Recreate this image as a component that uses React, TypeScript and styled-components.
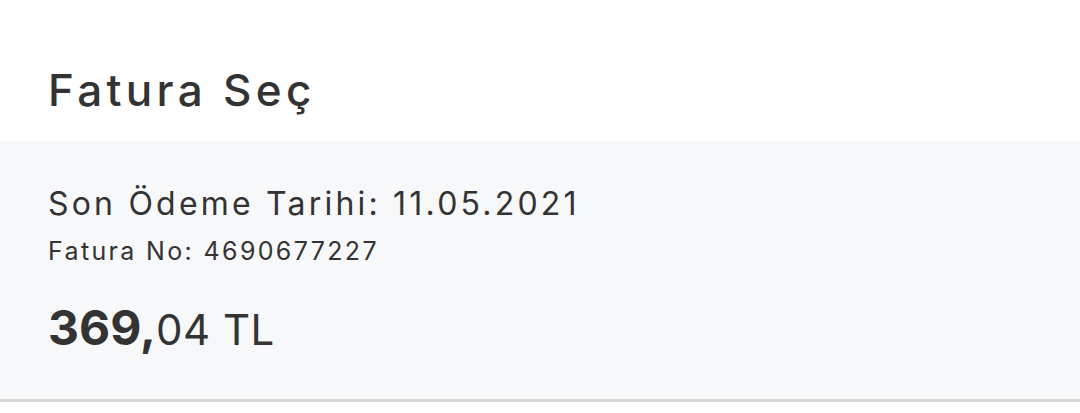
import React from "react";
import styled, { createGlobalStyle } from "styled-components";

const GlobalStyle = createGlobalStyle`
  html, body {
    margin: 0;
    padding: 0;
    background: #fff;
  }
  body {
    font-family: "Inter", "Noto Sans", sans-serif;
    color: #333333;
  }
`;

const Page = styled.div`
  width: 1080px;
  height: 413px;
  background: #fff;
  overflow: hidden;
`;

const Header = styled.div`
  height: 141px;
  box-sizing: border-box;
  padding: 62px 48px 0;
`;

const Title = styled.h1`
  margin: 0;
  font-size: 44px;
  line-height: 56px;
  font-weight: 500;
  letter-spacing: 4.3px;
  color: #333;
`;

const InvoiceCard = styled.div`
  background: #f7f8fa;
  height: 261px;
  box-sizing: border-box;
  padding: 43px 48px 0;
  border-bottom: 3px solid #dadadb;
`;

const DueDate = styled.div`
  font-size: 32px;
  line-height: 40px;
  letter-spacing: 3.2px;
  color: #333;
`;

const InvoiceNo = styled.div`
  margin-top: 11px;
  font-size: 25px;
  line-height: 32px;
  letter-spacing: 2.35px;
  color: #333;
`;

const Amount = styled.div`
  margin-top: 33px;
  line-height: 56px;
  color: #333;
  display: flex;
  align-items: baseline;
`;

const Whole = styled.span`
  font-size: 48px;
  font-weight: 700;
`;

const Fraction = styled.span`
  font-size: 42px;
  font-weight: 400;
  letter-spacing: 0.5px;
`;

export default function App() {
  return (
    <Page>
      <GlobalStyle />
      <Header>
        <Title>Fatura Seç</Title>
      </Header>
      <InvoiceCard>
        <DueDate>Son Ödeme Tarihi: 11.05.2021</DueDate>
        <InvoiceNo>Fatura No: 4690677227</InvoiceNo>
        <Amount>
          <Whole>369,</Whole>
          <Fraction>04 TL</Fraction>
        </Amount>
      </InvoiceCard>
    </Page>
  );
}
